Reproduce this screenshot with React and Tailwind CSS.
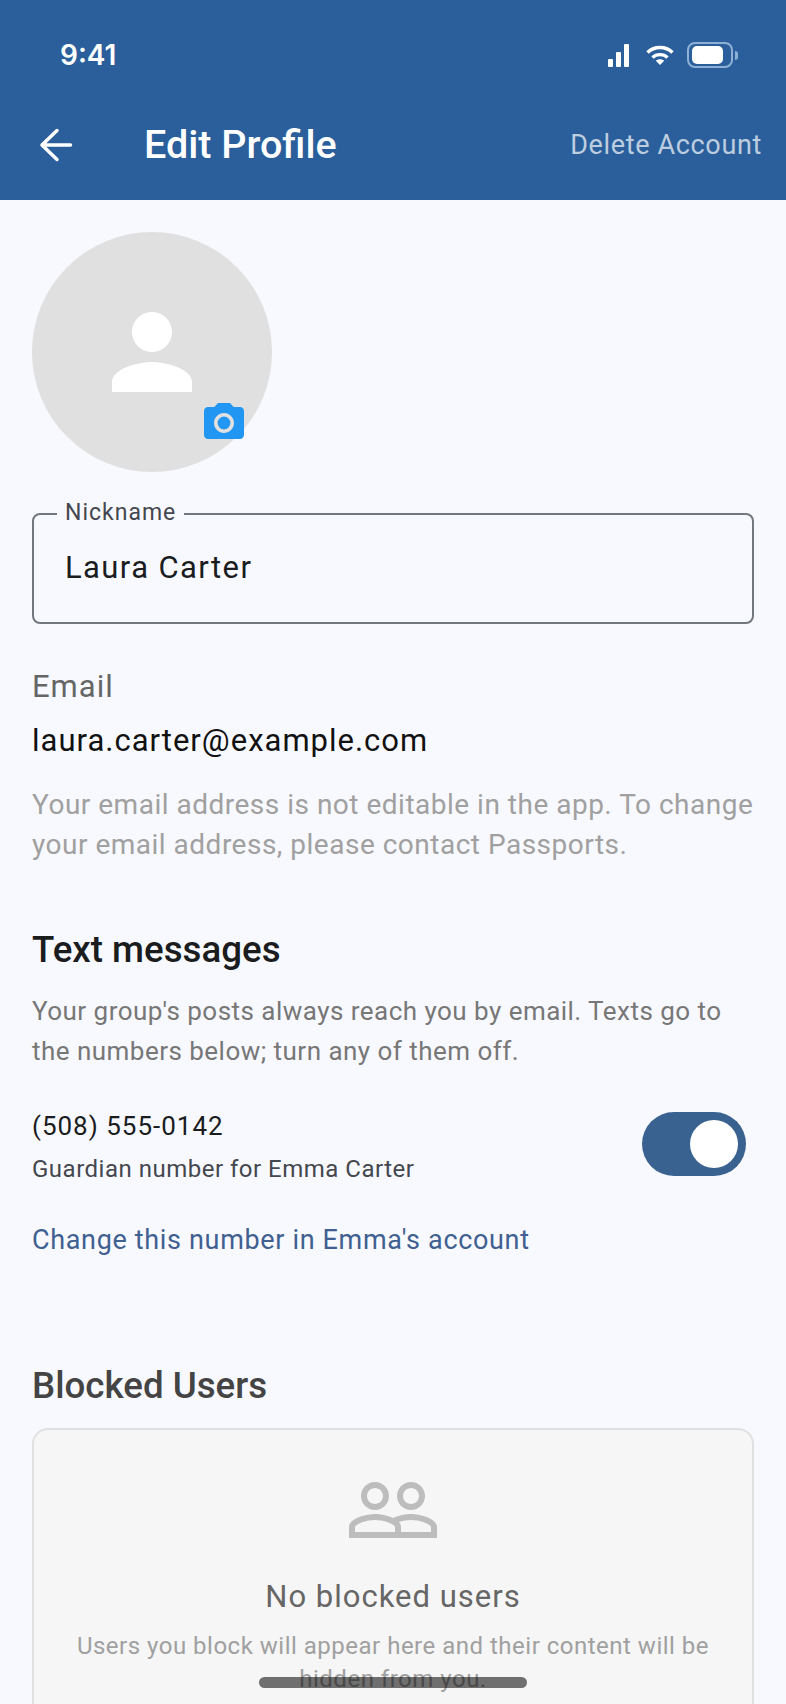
import { useState } from "react";
import { MdPeopleOutline } from "react-icons/md";

function StatusIcons() {
  return (
    <div className="flex items-center gap-[17px]">
      <svg width="21" height="23" viewBox="0 0 21 23" fill="white">
        <rect x="0" y="15" width="5" height="8" rx="1" />
        <rect x="8" y="8" width="5" height="15" rx="1" />
        <rect x="16" y="0" width="5" height="23" rx="1" />
      </svg>
      <svg width="28" height="20" viewBox="0 0 28 20" fill="none" stroke="white" strokeWidth="3.4">
        <path d="M1.500 7.500C8.500 .8 19.500 .8 26.500 7.500" />
        <path d="M6.500 12.500C10.500 8.600 17.500 8.600 21.500 12.500" />
        <path d="M14 20l-4.200-4.200c2.300-2 6.100-2 8.400 0z" fill="white" stroke="none" />
      </svg>
      <div className="-ml-[4px] flex items-center">
        <div className="flex h-[26px] w-[46px] items-center rounded-[8px] border-2 border-[#8fb0d6] pl-[3px]">
          <div className="h-[18px] w-[31px] rounded-[5px] bg-white" />
        </div>
        <div className="ml-[2px] h-[9px] w-[3px] rounded-r-full bg-[#8fb0d6]" />
      </div>
    </div>
  );
}

function Header() {
  return (
    <header className="h-[200px] bg-[#2a5f9c] text-white">
      <div className="flex items-center justify-between pt-[36px] pl-[60px] pr-[48px]">
        <span className="font-['Inter',sans-serif] text-[28px] leading-[38px] font-semibold">9:41</span>
        <StatusIcons />
      </div>
      <div className="mt-[47px] flex items-center justify-between pl-[32px] pr-[24px]">
        <div className="flex items-center gap-[64px]">
          <svg width="48" height="48" viewBox="0 0 48 48" fill="none" stroke="white" strokeWidth="3.500" strokeLinecap="round" strokeLinejoin="round">
            <path d="M38.500 24H10M25 9.500L10 24l15 14.500" />
          </svg>
          <h1 className="text-[39.500px] leading-[48px] font-medium">Edit Profile</h1>
        </div>
        <button className="text-[27px] leading-[36px] tracking-[0.65px] text-white/70">Delete Account</button>
      </div>
    </header>
  );
}

function Avatar() {
  return (
    <div className="relative flex h-[240px] w-[240px] items-center justify-center rounded-full bg-[#e0e0e0]">
      <svg width="120" height="120" viewBox="0 0 24 24" fill="white">
        <path d="M12 12c2.210 0 4-1.790 4-4s-1.790-4-4-4-4 1.790-4 4 1.790 4 4 4zm0 2c-2.670 0-8 1.340-8 4v2h16v-2c0-2.660-5.330-4-8-4z" />
      </svg>
      <svg width="48" height="48" viewBox="0 0 24 24" fill="#2196f3" className="absolute left-[168px] top-[167px]">
        <circle cx="12" cy="12" r="3.200" />
        <path d="M9 2L7.170 4H4c-1.100 0-2 .9-2 2v12c0 1.100.9 2 2 2h16c1.100 0 2-.9 2-2V6c0-1.100-.9-2-2-2h-3.170L15 2H9zm3 15c-2.760 0-5-2.240-5-5s2.240-5 5-5 5 2.240 5 5-2.240 5-5 5z" />
      </svg>
    </div>
  );
}

function Toggle({ on, onChange }) {
  return (
    <button
      onClick={() => onChange(!on)}
      className={`mb-[6px] flex h-[64px] w-[104px] items-center rounded-full px-[8px] ${on ? "justify-end bg-[#3a6290]" : "justify-start bg-gray-400"}`}
    >
      <span className="h-[48px] w-[48px] rounded-full bg-white" />
    </button>
  );
}

export default function App() {
  const [textsOn, setTextsOn] = useState(true);

  return (
    <div className="relative h-[1704px] w-[786px] overflow-hidden bg-[#f8f9ff] font-['Roboto',sans-serif]">
      <Header />
      <main className="px-[32px] pt-[32px]">
        <Avatar />

        <div className="relative mt-[41px] flex h-[111px] items-center rounded-[8px] border-2 border-[#73777f] pb-[2px] pl-[31px] pr-[30px]">
          <span className="absolute -top-[15px] left-[23px] bg-[#f8f9ff] px-[8px] text-[23px] leading-[26px] tracking-[1px] text-[#44474e]">
            Nickname
          </span>
          <span className="text-[31px] leading-[40px] tracking-[1.400px] text-[#1a1c1e]">Laura Carter</span>
        </div>

        <p className="mt-[43px] text-[31px] leading-[40px] tracking-[1px] text-[#666666]">Email</p>
        <p className="mt-[14px] text-[31px] leading-[40px] tracking-[1px] text-[#111111]">laura.carter@example.com</p>
        <p className="mt-[24px] text-[28px] leading-[40px] tracking-[0.5px] text-[#a0a0a0]">
          Your email address is not editable in the app. To change your email address, please contact Passports.
        </p>

        <h2 className="mt-[62px] text-[36.700px] leading-[46px] font-medium text-[#1a1c1e]">Text messages</h2>
        <p className="mt-[18px] text-[26px] leading-[40px] tracking-[0.47px] text-[#777777]">
          Your group's posts always reach you by email. Texts go to the numbers below; turn any of them off.
        </p>

        <div className="mt-[36px] flex items-center justify-between pr-[8px]">
          <div>
            <p className="text-[26px] leading-[38px] tracking-[1px] text-[#1a1c1e]">(508) 555-0142</p>
            <p className="mt-[6px] text-[24px] leading-[36px] tracking-[0.5px] text-[#44474e]">Guardian number for Emma Carter</p>
          </div>
          <Toggle on={textsOn} onChange={setTextsOn} />
        </div>

        <a className="mt-[33px] block text-[27px] leading-[40px] tracking-[0.66px] text-[#3f6090]">
          Change this number in Emma's account
        </a>

        <h2 className="mt-[103px] text-[36.700px] leading-[46px] font-medium text-[#444444]">Blocked Users</h2>

        <section className="mt-[19px] flex h-[320px] flex-col items-center rounded-[16px] border-2 border-[#e0e0e0] bg-[#f6f6f6] px-[32px] pt-[32px] text-center">
          <MdPeopleOutline size={96} color="#bdbdbd" className="shrink-0" />
          <p className="mt-[18px] text-[31px] leading-[42px] tracking-[1px] text-[#666666]">No blocked users</p>
          <p className="mt-[12px] text-[24px] leading-[33px] tracking-[0.5px] text-[#a0a0a0]">
            Users you block will appear here and their content will be hidden from you.
          </p>
        </section>
      </main>
      <div className="absolute bottom-[16px] left-[259px] h-[11px] w-[268px] rounded-full bg-black/55" />
    </div>
  );
}
